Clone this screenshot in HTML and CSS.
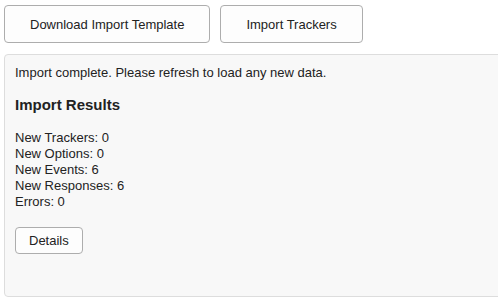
FILE: index.html
```html
<!DOCTYPE html>
<html lang="en">
<head>
  <meta charset="UTF-8">
  <title>Import Trackers</title>
  <link rel="stylesheet" href="styles.css">
</head>
<body>

  <div class="toolbar">
    <button class="btn btn-wide">Download Import Template</button>
    <button class="btn btn-wide">Import Trackers</button>
  </div>

  <div class="panel">
    <p class="status">Import complete. Please refresh to load any new data.</p>
    <h3>Import Results</h3>
    <ul class="results">
      <li>New Trackers: 0</li>
      <li>New Options: 0</li>
      <li>New Events: 6</li>
      <li>New Responses: 6</li>
      <li>Errors: 0</li>
    </ul>
    <button class="btn btn-small">Details</button>
  </div>

</body>
</html>
```

FILE: styles.css
```css
html, body {
  margin: 0;
  overflow: hidden;
}

body {
  font-family: "Liberation Sans", Arial, sans-serif;
  font-size: 13px;
  line-height: 16px;
  color: #222;
  background-color: #fff;
  padding: 5px 0 0 4px;
}

.toolbar {
  display: flex;
  gap: 10px;
}

.btn {
  font-family: inherit;
  font-size: 13px;
  color: #222;
  background-color: #fdfdfd;
  border: 1px solid #adadad;
  border-radius: 4px;
  cursor: pointer;
}

.btn-wide {
  height: 38px;
  padding: 0 25px;
}

.btn-small {
  height: 27px;
  padding: 0 13px;
}

.panel {
  margin: 11px -10px 0 0;
  height: 221px;
  padding: 10px 10px;
  background-color: #f8f8f8;
  border: 1px solid #ddd;
  border-radius: 4px;
}

.status {
  margin: 0 0 15px;
}

h3 {
  font-size: 15px;
  line-height: 18px;
  margin: 0 0 16px;
  color: #222;
}

.results {
  list-style: none;
  margin: 0 0 17px;
  padding: 0;
}
```
